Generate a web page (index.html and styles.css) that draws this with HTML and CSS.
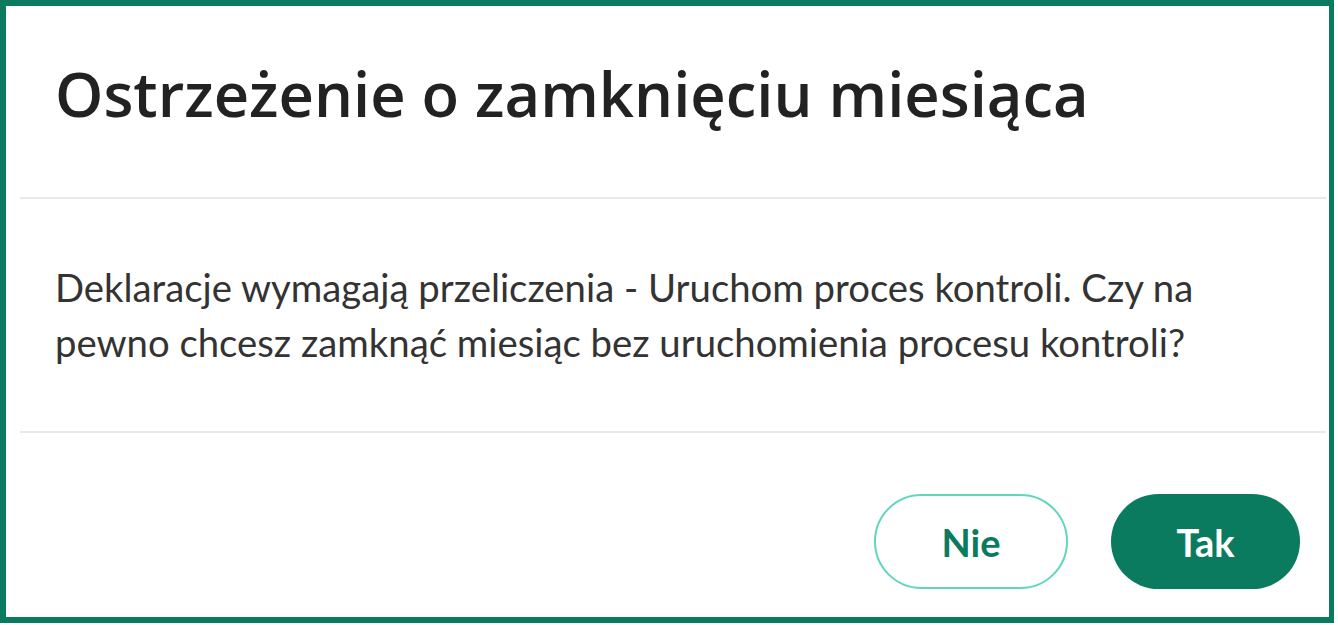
FILE: index.html
```html
<!DOCTYPE html>
<html lang="pl">
	<head>
		<meta charset="UTF-8" />
		<meta name="viewport" content="width=device-width, initial-scale=1.0" />
		<title>Ostrzeżenie o zamknięciu miesiąca</title>
		<link rel="stylesheet" href="styles.css">
	</head>
	<body>
		<div class="dialog">
			<header class="dialog-header">
				<h1>Ostrzeżenie o zamknięciu miesiąca</h1>
			</header>
			<div class="divider"></div>
			<div class="dialog-body">
				<p>Deklaracje wymagają przeliczenia - Uruchom proces kontroli. Czy na pewno chcesz zamknąć miesiąc bez uruchomienia procesu kontroli?</p>
			</div>
			<div class="divider"></div>
			<footer class="dialog-footer">
				<button class="btn btn-outline">Nie</button>
				<button class="btn btn-primary">Tak</button>
			</footer>
		</div>
	</body>
</html>
```

FILE: styles.css
```css
body {
	margin: 0;
	background: #fff;
	font-family: 'Lato', 'Open Sans', sans-serif;
}
.dialog {
	box-sizing: border-box;
	width: 1334px;
	height: 623px;
	border: 6px solid #0b7b5f;
	border-right-width: 5px;
	background: #fff;
	display: flex;
	flex-direction: column;
}
.dialog-header {
	box-sizing: border-box;
	height: 191px;
	padding: 0 0 16px 49px;
	display: flex;
	align-items: center;
}
.dialog-header h1 {
	margin: 0;
	font-family: 'Open Sans', sans-serif;
	font-weight: 600;
	font-size: 61.5px;
	line-height: 1.2;
	color: #222;
}
.divider {
	height: 2px;
	background: #e8e8e8;
	margin: 0 3px 0 14px;
}
.dialog-body {
	height: 232px;
	padding: 0 100px 0 49px;
	display: flex;
	align-items: center;
}
.dialog-body p {
	margin: 0;
	font-size: 38.3px;
	line-height: 55px;
	color: #333;
}
.dialog-footer {
	flex: 1;
	display: flex;
	justify-content: flex-end;
	align-items: flex-end;
	gap: 43px;
	padding: 0 29px 28px 0;
}
.btn {
	box-sizing: border-box;
	height: 95px;
	border-radius: 48px;
	font-family: 'Lato', sans-serif;
	font-weight: 700;
	font-size: 38px;
	cursor: pointer;
}
.btn-outline {
	width: 194px;
	background: #fff;
	border: 2px solid #5fd6be;
	color: #0b7b5f;
}
.btn-primary {
	width: 189px;
	background: #0b7b5f;
	border: none;
	color: #fff;
}
```
